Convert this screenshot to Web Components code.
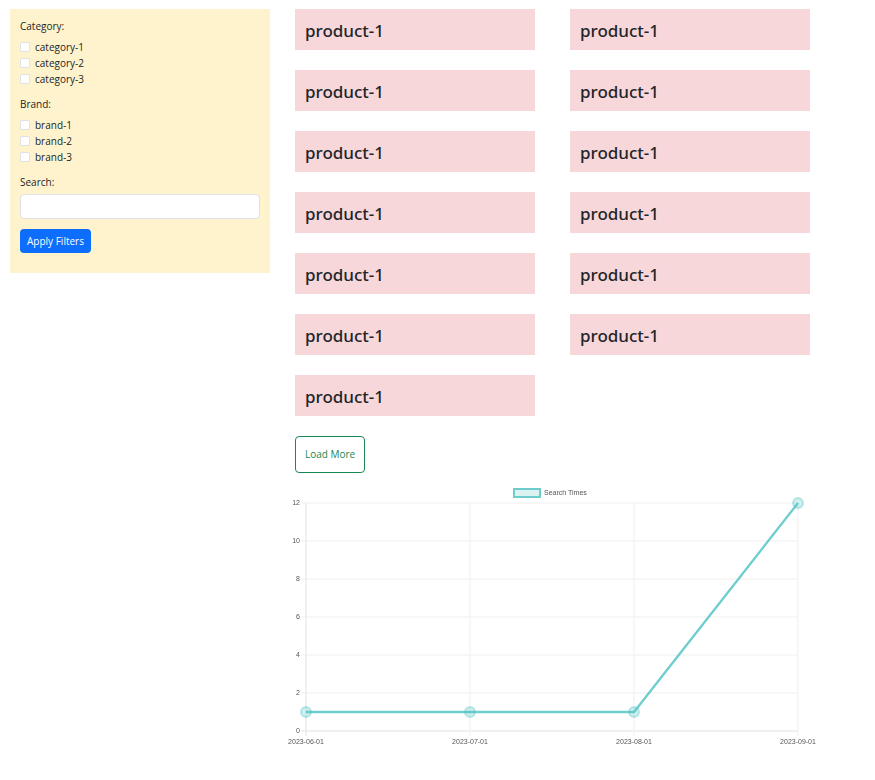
<!DOCTYPE html>
<html lang="en">
<head>
<meta charset="utf-8">
<title>Products</title>
<style>
  body { margin: 0; background: #fff; color: #212529; font: 10px/15px "Open Sans", "Noto Sans", sans-serif; }
</style>
</head>
<body>
<shop-page>
  <filter-panel slot="side">
    <filter-group label="Category:" options="category-1,category-2,category-3"></filter-group>
    <filter-group label="Brand:" options="brand-1,brand-2,brand-3"></filter-group>
  </filter-panel>
  <product-list count="13"></product-list>
  <load-more>Load More</load-more>
  <line-chart label="Search Times"></line-chart>
</shop-page>
<script>
class ShopPage extends HTMLElement {
  constructor() {
    super();
    this.attachShadow({ mode: "open" }).innerHTML = `
      <style>
        :host { display: grid; grid-template-columns: minmax(0, 260fr) minmax(0, 515fr); gap: 25px;
          align-items: start; padding: 9px 65px 9px 10px; }
        main { min-width: 0; }
      </style>
      <slot name="side"></slot><main><slot></slot></main>`;
  }
}
class FilterPanel extends HTMLElement {
  constructor() {
    super();
    this.attachShadow({ mode: "open" }).innerHTML = `
      <style>
        :host { display: block; background: #fff3cd; padding: 10px 10px 20px; }
        label { display: block; margin-bottom: 4px; }
        input { display: block; box-sizing: border-box; width: 100%; height: 25px; margin: 0 0 10px;
          padding: 4px 8px; border: 1px solid #dee2e6; border-radius: 4px; background: #fff; font: inherit; color: inherit; }
        button { display: block; height: 24px; margin: 0; padding: 0 7px; border: 0; border-radius: 4px;
          background: #0d6efd; color: #fff; font: inherit; }
      </style>
      <form onsubmit="return false">
        <slot></slot>
        <label for="q">Search:</label>
        <input id="q" type="text">
        <button type="submit">Apply Filters</button>
      </form>`;
  }
}
class FilterGroup extends HTMLElement {
  connectedCallback() {
    if (this.shadowRoot) return;
    const rows = this.getAttribute("options").split(",").map(o =>
      `<label><input type="checkbox" value="${o}">${o}</label>`).join("");
    this.attachShadow({ mode: "open" }).innerHTML = `
      <style>
        :host { display: block; margin-bottom: 10px; }
        fieldset { margin: 0; padding: 0; border: 0; min-width: 0; }
        legend { padding: 0; margin-bottom: 5px; }
        label { display: flex; align-items: center; gap: 5px; line-height: 16px; }
        input { appearance: none; box-sizing: border-box; width: 10px; height: 10px; margin: 0;
          border: 1px solid #dee2e6; border-radius: 2px; background: #fff; }
        input:checked { background: #0d6efd; border-color: #0d6efd; }
      </style>
      <fieldset><legend>${this.getAttribute("label")}</legend>${rows}</fieldset>`;
  }
}
class ProductCard extends HTMLElement {
  constructor() {
    super();
    this.attachShadow({ mode: "open" }).innerHTML = `
      <style>
        :host { display: block; background: #f8d7da; padding: 11px 10px 9px; }
        h2 { margin: 0; font: 500 17px/21px "Noto Sans", sans-serif; }
      </style>
      <h2><slot></slot></h2>`;
  }
}
class ProductList extends HTMLElement {
  connectedCallback() {
    if (this.shadowRoot) return;
    this.attachShadow({ mode: "open" }).innerHTML = `
      <style>
        :host { display: grid; grid-template-columns: repeat(2, minmax(0, 1fr)); gap: 20px 35px; }
      </style>` + "<product-card>product-1</product-card>".repeat(+this.getAttribute("count"));
  }
}
class LoadMore extends HTMLElement {
  constructor() {
    super();
    this.attachShadow({ mode: "open" }).innerHTML = `
      <style>
        :host { display: block; margin: 20px 0 10px; }
        button { display: block; margin: 0; padding: 10px 9px; border: 1px solid #198754; border-radius: 4px;
          background: #fff; color: #198754; font: inherit; }
      </style>
      <button type="button"><slot></slot></button>`;
  }
}
class LineChart extends HTMLElement {
  connectedCallback() {
    if (this.shadowRoot) return;
    const left = 21, right = 513, top = 20, bottom = 248;
    const data = [["2023-06-01", 1], ["2023-07-01", 1], ["2023-08-01", 1], ["2023-09-01", 12]];
    const y = v => Math.round(bottom - v * (bottom - top) / 12);
    const x = i => left + i * (right - left) / 3;
    let grid = "", text = "";
    for (let v = 0; v <= 12; v += 2) {
      grid += `<path class="${v ? "grid" : "grid axis"}" d="M${left - 5} ${y(v)}H${right}"/>`;
      text += `<text x="${left - 6}" y="${y(v) + 2}" text-anchor="end">${v}</text>`;
    }
    data.forEach(([d], i) => {
      grid += `<path class="${i ? "grid" : "grid axis"}" d="M${x(i)} ${top}V${bottom + 5}"/>`;
      text += `<text x="${x(i)}" y="${bottom + 13}" text-anchor="middle">${d}</text>`;
    });
    const pts = data.map(([, v], i) => [x(i), y(v)]);
    this.attachShadow({ mode: "open" }).innerHTML = `
      <style>
        :host { display: block; margin: 0 -10px; }
        svg { display: block; width: 100%; overflow: visible; }
        text { font: 7px "Liberation Sans", sans-serif; fill: #555; }
        .soft { filter: url(#soft); }
        .grid { stroke: #f5f5f5; stroke-width: 1.5; }
        .axis { stroke: #ebebeb; }
        .line { fill: none; stroke: #4bc0c0; stroke-opacity: .8; stroke-width: 2.3; }
        circle { fill: #4bc0c0; fill-opacity: .25; stroke: #4bc0c0; stroke-opacity: .35; stroke-width: 2; }
        rect { fill: #dbf2f2; stroke: #6fcccc; stroke-width: 2; }
      </style>
      <svg viewBox="0 0 535 268" role="img" aria-label="${this.getAttribute("label")}">
        <defs><filter id="soft" filterUnits="userSpaceOnUse" x="-10" y="-10" width="555" height="288" color-interpolation-filters="sRGB"><feGaussianBlur stdDeviation="0.5"/></filter></defs>
        <g class="soft">
          ${grid}
          <polyline class="line" points="${pts.join(" ")}"/>
          ${pts.map(([a, b]) => `<circle cx="${a}" cy="${b}" r="5"/>`).join("")}
          <rect x="229" y="6" width="26" height="8"/>
          <text x="259" y="12">${this.getAttribute("label")}</text>
          ${text}
        </g>
      </svg>`;
  }
}
customElements.define("shop-page", ShopPage);
customElements.define("filter-panel", FilterPanel);
customElements.define("filter-group", FilterGroup);
customElements.define("product-card", ProductCard);
customElements.define("product-list", ProductList);
customElements.define("load-more", LoadMore);
customElements.define("line-chart", LineChart);
</script>
</body>
</html>
